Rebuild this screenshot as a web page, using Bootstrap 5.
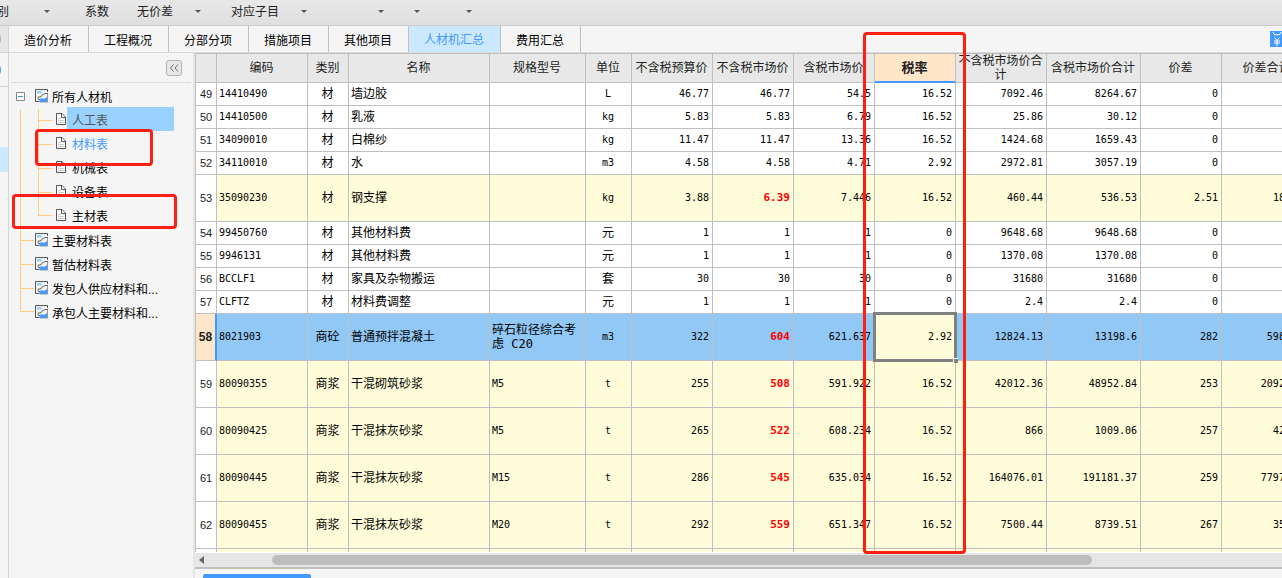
<!DOCTYPE html>
<html lang="zh-CN">
<head>
<meta charset="utf-8">
<meta name="viewport" content="width=device-width, initial-scale=1">
<title>人材机汇总</title>
<link href="https://cdn.jsdelivr.net/npm/bootstrap@5.3.0/dist/css/bootstrap.min.css" rel="stylesheet">
<style>
  :root { --line: #c0c0c0; --accent: #4499ff; --pale: #fffcd9; --peach: #ffe6c8; }
  body { font-family: "Liberation Sans", "Noto Sans CJK SC", sans-serif; font-size: 12px; line-height: 14px; color: #000; background: #f5f5f5; }
  button { font: inherit; color: inherit; background: none; border: 0; padding: 0; white-space: nowrap; }

  /* top toolbar */
  .toolbar { height: 26px; padding-bottom: 2px; background: linear-gradient(#e8e8e8, #dfdfdf); border-bottom: 1px solid #cdcdcd; color: #222; }
  .toolbar button { display: flex; align-items: center; gap: 22px; flex: none; }
  .toolbar .drop::after { content: ""; border: 3px solid transparent; border-width: 3px 3px 0; border-top-color: #555; margin: -1px -1px 0 0; }
  .toolbar .wide { gap: 35px; margin-left: -15px; }
  .toolbar .gap-a { margin-left: 36px; }
  .toolbar .gap-b { margin-left: 28px; }
  .toolbar .gap-c { margin-left: 31px; }
  .toolbar .gap-d { margin-left: 72px; }
  .toolbar .gap-e { margin-left: 47px; }

  /* left rail */
  .rail { width: 9px; border-right: 1px solid #d4d4d4; background: #f5f5f5; }
  .rail-top { height: 27px; background: #e6e6e6; border-bottom: 1px solid #d4d4d4; }
  .rail-mid { height: 34px; border-bottom: 1px solid #d4d4d4; }
  .rail-on { height: 25px; margin-top: 60px; background: #cce8ff; }
  .knob { width: 7px; height: 12px; margin-left: -6px; border-radius: 50%; background: #aaa; }
  .knob.on { background: var(--accent); }

  /* page tabs */
  .tabs { height: 27px; border-bottom: 1px solid #d9d9d9; }
  .tabs button { height: 26px; padding: 3px 16px 0 15px; border-right: 1px solid var(--line); }
  .tabs button.active { background: #cce8ff; color: var(--accent); padding-bottom: 1px; }

  /* sidebar tree */
  .side { width: 186px; border-right: 2px solid #e6e6e6; }
  .side-head { height: 30px; margin: 0 2px; border-bottom: 1px solid #dcdcdc; }
  .fold { width: 16px; height: 16px; margin: 7px 9px 0 0; border: 1px solid #b4b4b4; border-radius: 3px; background: #e8e8e8; }
  .fold svg { display: block; }
  .tree, .tree ul { list-style: none; margin: 0; padding: 0; }
  .tree { padding: 2px 0 0 7px; }
  .node { display: flex; align-items: center; height: 24px; white-space: nowrap; }
  .node a { color: inherit; text-decoration: none; padding-top: 2px; }
  .node svg { flex: none; }
  .node .box { margin-top: -2px; }
  .folder { margin: -2px 4px 0 1px; }
  .box + .folder { margin-left: 10px; }
  .branch { width: 14px; height: 24px; margin-left: 4px; border-left: 1px solid #ffcc80; background: linear-gradient(#ffcc80, #ffcc80) 0 11px / 14px 1px no-repeat; }
  .stem { width: 18px; height: 24px; margin-left: 4px; border-left: 1px solid #ffcc80; }
  .leaf { margin-left: 0; }
  .file { margin: -5px 1px 0 4px; }
  .last { align-self: flex-start; height: 11px; background: none; border-bottom: 1px solid #ffcc80; }
  .node .pick { width: 107px; height: 24px; margin-top: -4px; padding: 7px 0 0 5px; }
  .pick.sel { background: #99d1ff; color: #555; }
  .pick.cur { color: var(--accent); }

  /* data grid */
  .cost-grid { width: 1118px; table-layout: fixed; border-collapse: separate; border-spacing: 0; background: #fff; }
  .cost-grid th, .cost-grid td { border: 0 solid var(--line); border-width: 0 1px 1px 0; padding: 0 3px 0 2px; height: 23px; text-align: right; white-space: nowrap; font-family: "DejaVu Sans Mono", "Noto Sans CJK SC", monospace; font-size: 10px; line-height: 14px; vertical-align: middle; }
  .cost-grid thead th { height: 30px; padding: 0 1px 0 0; border-top-width: 1px; background: #e8e8e8; color: #222; text-align: center; font-size: 12px; font-weight: 400; white-space: normal; }
  .cost-grid tr > :first-child { border-left-width: 1px; }
  .cost-grid tbody th { padding: 0; text-align: center; font: 400 11px/14px "Liberation Sans", sans-serif; color: #222; }
  .cost-grid td:nth-child(3) { text-align: center; padding: 0 1px 0 0; font-size: 12px; }
  .cost-grid td:nth-child(4) { text-align: left; font-size: 12px; }
  .cost-grid td:nth-child(2), .cost-grid td:nth-child(5) { text-align: left; }
  .cost-grid td:nth-child(5) { white-space: normal; }
  .cost-grid td:nth-child(6) { text-align: center; padding: 0 1px 0 0; }
  .cost-grid td.han { font-size: 12px; }
  .cost-grid .tall td { height: 47px; background: var(--pale); }
  .cost-grid .tall td:nth-child(8) { color: #f00; font-size: 11px; font-weight: 700; }
  .cost-grid .now td { background: #91c8f6; }
  .cost-grid .now th { background: var(--peach); font-weight: 700; border-right: 2px solid var(--accent); font-size: 12px; }
  .cost-grid thead .hot { background: var(--peach); border-bottom: 2px solid var(--accent); font-weight: 700; font-size: 13px; }
  .cost-grid .now .focus-cell { position: relative; background: var(--pale); }
  .focus-cell::before { content: ""; position: absolute; inset: -2px; border: 3px solid #808080; }
  .focus-cell::after { content: ""; position: absolute; right: -3px; bottom: -3px; width: 5px; height: 5px; border: solid #fff; border-width: 1px 0 0 1px; background: #808080; }

  /* horizontal scroll bar and bottom strip */
  .hbar { height: 15px; padding-left: 4px; border-top: 1px solid #fff; background: #e6e6e6; }
  .hthumb { width: 75.7%; height: 10px; margin-left: 68px; border-radius: 5px; background: #bdbdbd; }
  .foot { height: 11px; border-top: 2px solid var(--line); }
  .foot-tab { width: 108px; height: 4px; margin-left: 8px; border-radius: 2px 2px 0 0; background: var(--accent); }

  /* red review marks */
  .frame { position: absolute; border: 3px solid #ff1f12; border-radius: 4px; pointer-events: none; z-index: 5; }
  .frame-rate { left: 863px; top: 32px; width: 103px; height: 522px; }
  .frame-mat { left: 35px; top: 129px; width: 118px; height: 37px; }
  .frame-main { left: 12px; top: 194px; width: 165px; height: 35px; }
</style>
</head>
<body class="vh-100 overflow-hidden d-flex flex-column position-relative">
<svg width="0" height="0" class="position-absolute" aria-hidden="true">
  <symbol id="i-folder" viewBox="0 0 13 14"><path d="M12.500 3V.5H.5v12h4" fill="none" stroke="#555"/><path d="M2 2h4.500v2.500H2z" fill="#99ccff"/><path d="M3 9.500V8h3l1-2 3-1.500h3M3 10.500h2" fill="none" stroke="#666"/><path d="M12.500 4v9H5" fill="none" stroke="#555" stroke-width=".6"/><path d="M4.500 13v-2.500l2.500-1.500 2 1 3-2v5z" fill="#4499ff"/></symbol>
  <symbol id="i-file" viewBox="0 0 10 12"><path d="M.5.5h5.500l3.500 3.500v7.500h-9z" fill="#fff" stroke="#555"/><path d="M5.500.5v4h4" fill="none" stroke="#555"/><path d="M2 5.500h3M2 7.500h6M2 9.500h6" stroke="#ccc"/></symbol>
</svg>

<header class="toolbar d-flex align-items-center flex-shrink-0">
  <button type="button" class="drop wide">类别</button>
  <button type="button" class="gap-a">系数</button>
  <button type="button" class="drop gap-b">无价差</button>
  <button type="button" class="drop gap-c">对应子目</button>
  <button type="button" class="drop gap-d" aria-label="更多"></button>
  <button type="button" class="drop gap-c" aria-label="更多"></button>
  <button type="button" class="drop gap-e" aria-label="更多"></button>
</header>

<div class="d-flex flex-grow-1 overflow-hidden">
  <aside class="rail flex-shrink-0 overflow-hidden">
    <div class="rail-top d-flex align-items-center"><div class="knob"></div></div>
    <div class="rail-mid d-flex align-items-center"><div class="knob on"></div></div>
    <div class="rail-on"></div>
  </aside>

  <div class="d-flex flex-column flex-grow-1 overflow-hidden">
    <nav class="tabs d-flex flex-shrink-0">
      <button type="button">造价分析</button><button type="button">工程概况</button><button type="button">分部分项</button><button type="button">措施项目</button><button type="button">其他项目</button><button type="button" class="active">人材机汇总</button><button type="button">费用汇总</button>
      <svg class="ms-auto mt-1" width="12" height="18" viewBox="0 0 12 18"><path d="M0 1h12v16H0z" fill="#4499ff"/><path d="M3 2q0 3 4 3t4-3" fill="none" stroke="#fff"/><path d="M4.500 7.500L7 10.500l2.500-3M4 11h6M4 13h6M7 10.500V16" fill="none" stroke="#fff"/></svg>
    </nav>

    <div class="d-flex flex-grow-1 overflow-hidden">
      <aside class="side flex-shrink-0">
        <div class="side-head d-flex justify-content-end align-items-start">
          <button type="button" class="fold" aria-label="收起"><svg width="14" height="14" viewBox="0 0 14 14"><path d="M6.500 3.500l-3 3.500 3 3.500M11 3.500L8 7l3 3.500" fill="none" stroke="#666"/></svg></button>
        </div>
        <ul class="tree">
          <li><div class="node"><svg class="box" width="9" height="9" viewBox="0 0 9 9"><path d="M.5.5h8v8h-8z" fill="#fff" stroke="#888"/><path d="M2 4.500h5" stroke="#3399cc"/></svg><svg class="folder" width="13" height="14"><use href="#i-folder"/></svg><a href="#">所有人材机</a></div>
            <ul>
              <li class="node"><i class="stem"></i><i class="branch leaf"></i><svg class="file" width="10" height="12"><use href="#i-file"/></svg><a href="#" class="pick sel">人工表</a></li>
              <li class="node"><i class="stem"></i><i class="branch leaf"></i><svg class="file" width="10" height="12"><use href="#i-file"/></svg><a href="#" class="pick cur">材料表</a></li>
              <li class="node"><i class="stem"></i><i class="branch leaf"></i><svg class="file" width="10" height="12"><use href="#i-file"/></svg><a href="#" class="pick">机械表</a></li>
              <li class="node"><i class="stem"></i><i class="branch leaf"></i><svg class="file" width="10" height="12"><use href="#i-file"/></svg><a href="#" class="pick">设备表</a></li>
              <li class="node"><i class="stem"></i><i class="branch leaf last"></i><svg class="file" width="10" height="12"><use href="#i-file"/></svg><a href="#" class="pick">主材表</a></li>
            </ul>
          </li>
          <li class="node"><i class="branch"></i><svg class="folder" width="13" height="14"><use href="#i-folder"/></svg><a href="#">主要材料表</a></li>
          <li class="node"><i class="branch"></i><svg class="folder" width="13" height="14"><use href="#i-folder"/></svg><a href="#">暂估材料表</a></li>
          <li class="node"><i class="branch"></i><svg class="folder" width="13" height="14"><use href="#i-folder"/></svg><a href="#">发包人供应材料和...</a></li>
          <li class="node"><i class="branch last"></i><svg class="folder" width="13" height="14"><use href="#i-folder"/></svg><a href="#">承包人主要材料和...</a></li>
        </ul>
      </aside>

      <main class="d-flex flex-column flex-grow-1 overflow-hidden">
        <div class="flex-grow-1 overflow-hidden">
          <table class="cost-grid">
            <colgroup><col style="width:22px"><col style="width:91px"><col style="width:41px"><col style="width:141px"><col style="width:96px"><col style="width:46px"><col style="width:81px"><col style="width:81px"><col style="width:81px"><col style="width:81px"><col style="width:91px"><col style="width:94px"><col style="width:81px"><col style="width:91px"></colgroup>
            <thead><tr><th></th><th>编码</th><th>类别</th><th>名称</th><th>规格型号</th><th>单位</th><th>不含税预算价</th><th>不含税市场价</th><th>含税市场价</th><th class="hot">税率</th><th>不含税市场价合计</th><th>含税市场价合计</th><th>价差</th><th>价差合计</th></tr></thead>
            <tbody>
              <tr><th>49</th><td>14410490</td><td>材</td><td>墙边胶</td><td></td><td>L</td><td>46.77</td><td>46.77</td><td>54.5</td><td>16.52</td><td>7092.46</td><td>8264.67</td><td>0</td><td>0</td></tr>
              <tr><th>50</th><td>14410500</td><td>材</td><td>乳液</td><td></td><td>kg</td><td>5.83</td><td>5.83</td><td>6.79</td><td>16.52</td><td>25.86</td><td>30.12</td><td>0</td><td>0</td></tr>
              <tr><th>51</th><td>34090010</td><td>材</td><td>白棉纱</td><td></td><td>kg</td><td>11.47</td><td>11.47</td><td>13.36</td><td>16.52</td><td>1424.68</td><td>1659.43</td><td>0</td><td>0</td></tr>
              <tr><th>52</th><td>34110010</td><td>材</td><td>水</td><td></td><td>m3</td><td>4.58</td><td>4.58</td><td>4.71</td><td>2.92</td><td>2972.81</td><td>3057.19</td><td>0</td><td>0</td></tr>
              <tr class="tall"><th>53</th><td>35090230</td><td>材</td><td>钢支撑</td><td></td><td>kg</td><td>3.88</td><td>6.39</td><td>7.446</td><td>16.52</td><td>460.44</td><td>536.53</td><td>2.51</td><td>180.86</td></tr>
              <tr><th>54</th><td>99450760</td><td>材</td><td>其他材料费</td><td></td><td class="han">元</td><td>1</td><td>1</td><td>1</td><td>0</td><td>9648.68</td><td>9648.68</td><td>0</td><td>0</td></tr>
              <tr><th>55</th><td>9946131</td><td>材</td><td>其他材料费</td><td></td><td class="han">元</td><td>1</td><td>1</td><td>1</td><td>0</td><td>1370.08</td><td>1370.08</td><td>0</td><td>0</td></tr>
              <tr><th>56</th><td>BCCLF1</td><td>材</td><td>家具及杂物搬运</td><td></td><td class="han">套</td><td>30</td><td>30</td><td>30</td><td>0</td><td>31680</td><td>31680</td><td>0</td><td>0</td></tr>
              <tr><th>57</th><td>CLFTZ</td><td>材</td><td>材料费调整</td><td></td><td class="han">元</td><td>1</td><td>1</td><td>1</td><td>0</td><td>2.4</td><td>2.4</td><td>0</td><td>0</td></tr>
              <tr class="tall now"><th>58</th><td>8021903</td><td>商砼</td><td>普通预拌混凝土</td><td class="han">碎石粒径综合考虑 C20</td><td>m3</td><td>322</td><td>604</td><td>621.637</td><td class="focus-cell">2.92</td><td>12824.13</td><td>13198.6</td><td>282</td><td>5987.42</td></tr>
              <tr class="tall"><th>59</th><td>80090355</td><td>商浆</td><td>干混砌筑砂浆</td><td>M5</td><td>t</td><td>255</td><td>508</td><td>591.922</td><td>16.52</td><td>42012.36</td><td>48952.84</td><td>253</td><td>20923.48</td></tr>
              <tr class="tall"><th>60</th><td>80090425</td><td>商浆</td><td>干混抹灰砂浆</td><td>M5</td><td>t</td><td>265</td><td>522</td><td>608.234</td><td>16.52</td><td>866</td><td>1009.06</td><td>257</td><td>426.36</td></tr>
              <tr class="tall"><th>61</th><td>80090445</td><td>商浆</td><td>干混抹灰砂浆</td><td>M15</td><td>t</td><td>286</td><td>545</td><td>635.034</td><td>16.52</td><td>164076.01</td><td>191181.37</td><td>259</td><td>77973.73</td></tr>
              <tr class="tall"><th>62</th><td>80090455</td><td>商浆</td><td>干混抹灰砂浆</td><td>M20</td><td>t</td><td>292</td><td>559</td><td>651.347</td><td>16.52</td><td>7500.44</td><td>8739.51</td><td>267</td><td>3582.5</td></tr>
              <tr class="tall"><th></th><td></td><td></td><td></td><td></td><td></td><td></td><td></td><td></td><td></td><td></td><td></td><td></td><td></td></tr>
            </tbody>
          </table>
        </div>
        <div class="hbar d-flex align-items-center flex-shrink-0">
          <svg width="5" height="8" viewBox="0 0 5 8"><path d="M5 0v8L0 4z" fill="#666"/></svg>
          <div class="hthumb"></div>
        </div>
        <div class="foot d-flex align-items-end flex-shrink-0"><div class="foot-tab"></div></div>
      </main>
    </div>
  </div>
</div>

<div class="frame frame-rate"></div>
<div class="frame frame-mat"></div>
<div class="frame frame-main"></div>
<script src="https://cdn.jsdelivr.net/npm/bootstrap@5.3.0/dist/js/bootstrap.bundle.min.js"></script>
</body>
</html>
